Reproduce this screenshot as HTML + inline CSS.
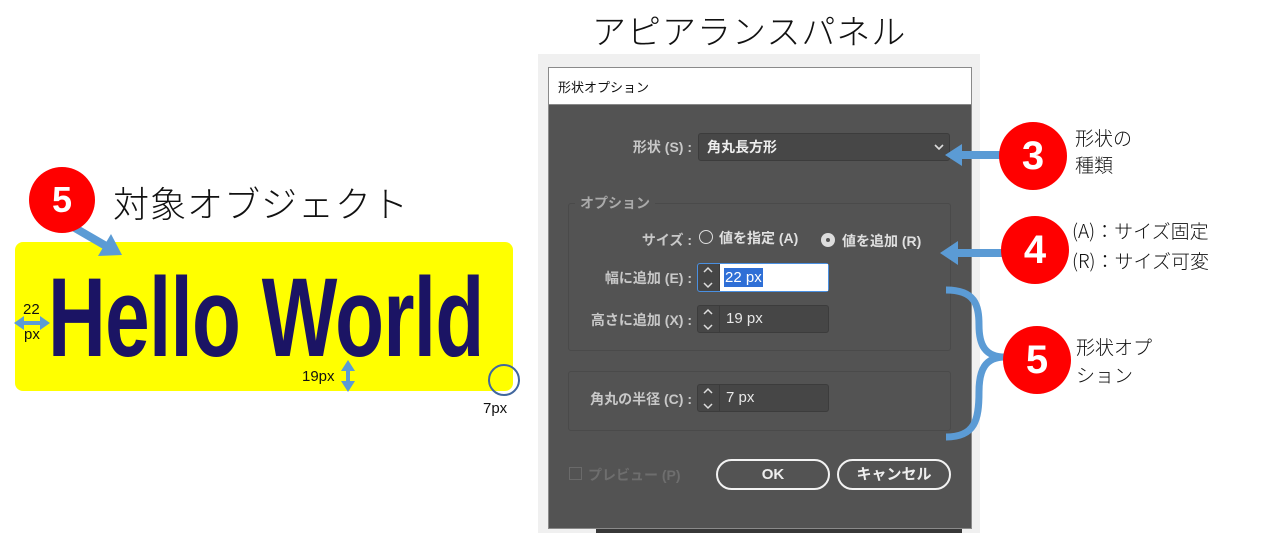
<!DOCTYPE html>
<html><head><meta charset="utf-8"><style>
*{margin:0;padding:0;box-sizing:border-box}
body{width:1269px;height:533px;background:#fff;position:relative;overflow:hidden;font-family:"Liberation Sans","Noto Sans CJK JP",sans-serif}
.a{position:absolute;white-space:nowrap}
.lbl{color:#c8c8c8;font-size:14px;font-weight:bold;text-align:right;width:200px}
.inp{position:absolute;background:#464646;border:1px solid #3c3c3c;border-radius:3px}
.spin{position:absolute;left:0;top:0;bottom:0;width:22px;border-right:1px solid #3c3c3c}
.val{position:absolute;left:28px;top:4px;color:#e8e8e8;font-size:15px}
.btn{position:absolute;border:2px solid #f2f2f2;border-radius:16px;color:#eee;font-size:15px;font-weight:bold;text-align:center;line-height:27px}
.rc{position:absolute;border-radius:50%;background:#f00;color:#fff;font-weight:bold;font-size:40px;text-align:center}
.jp{color:#111;font-family:"Noto Sans CJK JP",sans-serif;font-weight:300}
</style></head><body>

<div class="a jp" style="left:592px;top:5px;font-size:34px;letter-spacing:1px">アピアランスパネル</div>

<div class="a" style="left:538px;top:54px;width:442px;height:479px;background:#f0f0f0"></div>
<div class="a" style="left:596px;top:526px;width:366px;height:7px;background:#383838"></div>
<div class="a" style="left:548px;top:67px;width:424px;height:462px;border:1px solid #8a8a8a;background:#535353"></div>
<div class="a" style="left:549px;top:68px;width:422px;height:37px;background:#fff;border-bottom:1px solid #888"></div>
<div class="a" style="left:558px;top:77px;font-size:13px;color:#111;font-family:'Noto Sans CJK JP',sans-serif">形状オプション</div>

<div class="a lbl" style="left:492px;top:137px">形状 (S) :</div>
<div class="inp" style="left:698px;top:133px;width:252px;height:28px;background:#474747"></div>
<div class="a" style="left:707px;top:137px;color:#eee;font-size:14px;font-weight:bold">角丸長方形</div>
<svg class="a" style="left:933px;top:143px" width="12" height="8"><path d="M2 2 L6 6 L10 2" stroke="#ddd" stroke-width="1.6" fill="none"/></svg>

<div class="a" style="left:568px;top:203px;width:383px;height:148px;border:1px solid #4a4a4a;border-radius:3px"></div>
<div class="a" style="left:575px;top:193px;background:#535353;padding:0 5px;color:#aaa;font-size:14px;font-weight:bold">オプション</div>

<div class="a lbl" style="left:492px;top:230px">サイズ :</div>
<div class="a" style="left:699px;top:230px;width:14px;height:14px;border:1.5px solid #ddd;border-radius:50%"></div>
<div class="a" style="left:719px;top:228px;color:#e0e0e0;font-size:14px;font-weight:bold">値を指定 (A)</div>
<div class="a" style="left:821px;top:233px;width:14px;height:14px;background:#ddd;border-radius:50%"></div>
<div class="a" style="left:826px;top:238px;width:4px;height:4px;background:#555;border-radius:50%"></div>
<div class="a" style="left:842px;top:231px;color:#e0e0e0;font-size:14px;font-weight:bold">値を追加 (R)</div>

<div class="a lbl" style="left:492px;top:268px">幅に追加 (E) :</div>
<div class="inp" style="left:697px;top:263px;width:132px;height:29px;border:1px solid #4a90e2"><div class="spin"></div></div>
<div class="a" style="left:720px;top:264px;width:108px;height:27px;background:#fff"></div>
<div class="a" style="left:724px;top:268px;background:#2f6fd6;color:#fff;font-size:15px;line-height:19px;padding:0 1px">22 px</div>

<div class="a lbl" style="left:492px;top:310px">高さに追加 (X) :</div>
<div class="inp" style="left:697px;top:305px;width:132px;height:28px"><div class="spin"></div><div class="val">19 px</div></div>

<div class="a" style="left:568px;top:371px;width:383px;height:60px;border:1px solid #4a4a4a;border-radius:3px"></div>
<div class="a lbl" style="left:492px;top:389px">角丸の半径 (C) :</div>
<div class="inp" style="left:697px;top:384px;width:132px;height:28px"><div class="spin"></div><div class="val">7 px</div></div>

<svg class="a" style="left:0;top:0" width="1269" height="533">
 <g fill="none" stroke="#ddd" stroke-width="1.5">
  <path d="M704 272 L708 268 L712 272 M704 283 L708 287 L712 283"/>
  <path d="M704 314 L708 310 L712 314 M704 325 L708 329 L712 325"/>
  <path d="M704 393 L708 389 L712 393 M704 404 L708 408 L712 404"/>
 </g>
</svg>

<div class="a" style="left:569px;top:467px;width:13px;height:13px;border:1px solid #6a6a6a"></div>
<div class="a" style="left:588px;top:465px;color:#6e6e6e;font-size:14px;font-weight:bold">プレビュー (P)</div>
<div class="btn" style="left:716px;top:459px;width:114px;height:31px">OK</div>
<div class="btn" style="left:837px;top:459px;width:114px;height:31px">キャンセル</div>

<div class="a" style="left:15px;top:242px;width:498px;height:149px;background:#ffff00;border-radius:8px"></div>
<div class="a" style="left:48px;top:253px;font-size:112px;font-weight:bold;color:#1b1464;transform:scaleX(0.715);transform-origin:0 0;letter-spacing:-1px;line-height:130px">Hello World</div>

<div class="a jp" style="left:113px;top:176px;font-size:36px;letter-spacing:1px">対象オブジェクト</div>
<div class="a" style="left:23px;top:301px;font-size:15px;color:#111">22</div>
<div class="a" style="left:24px;top:326px;font-size:15px;color:#111">px</div>
<div class="a" style="left:302px;top:368px;font-size:15px;color:#111">19px</div>
<div class="a" style="left:483px;top:400px;font-size:15px;color:#111">7px</div>

<svg class="a" style="left:0;top:0" width="1269" height="533">
 <line x1="68" y1="224" x2="106" y2="246" stroke="#5b9bd5" stroke-width="8"/>
 <g fill="#5b9bd5" stroke="none">
  <path d="M122 255 L98 256 L111 234 Z"/>
  <path d="M14 323 L24 316 L24 321 L40 321 L40 316 L50 323 L40 330 L40 325 L24 325 L24 330 Z"/>
  <path d="M348 360 L355 371 L350 371 L350 381 L355 381 L348 392 L341 381 L346 381 L346 371 L341 371 Z"/>
  <path d="M945 155 L962 144 L962 151 L1005 151 L1005 159 L962 159 L962 166 Z"/>
  <path d="M940 253 L958 241 L958 249 L1005 249 L1005 257 L958 257 L958 265 Z"/>
 </g>
 <circle cx="504" cy="380" r="15" fill="none" stroke="#41679e" stroke-width="2"/>
 <path d="M946 290 C975 290 979 305 979 325 C979 345 985 357 1005 357 C985 357 979 370 979 392 C979 420 975 437 946 437" fill="none" stroke="#5b9bd5" stroke-width="7"/>
</svg>

<div class="rc" style="left:29px;top:167px;width:66px;height:66px;line-height:66px;font-size:36px">5</div>
<div class="rc" style="left:999px;top:122px;width:68px;height:68px;line-height:68px">3</div>
<div class="rc" style="left:1001px;top:216px;width:68px;height:68px;line-height:68px">4</div>
<div class="rc" style="left:1003px;top:326px;width:68px;height:68px;line-height:68px">5</div>

<div class="a jp" style="left:1075px;top:124px;font-size:19px;line-height:27px">形状の<br>種類</div>
<div class="a jp" style="left:1072px;top:216px;font-size:19px;line-height:30px">(A)：サイズ固定<br>(R)：サイズ可変</div>
<div class="a jp" style="left:1076px;top:333px;font-size:19px;line-height:28px">形状オプ<br>ション</div>

</body></html>
